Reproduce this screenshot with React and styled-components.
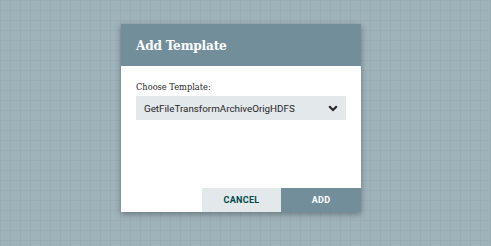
import React from "react";
import styled, { createGlobalStyle } from "styled-components";

const Global = createGlobalStyle`
  html, body { margin: 0; padding: 0; }
  body { font-family: Roboto, "Liberation Sans", sans-serif; }
  #root { width: 491px; height: 246px; }
`;

const Canvas = styled.div`
  position: relative;
  width: 491px;
  height: 246px;
  overflow: hidden;
  background-color: #9fb3bb;
  background-image:
    linear-gradient(to right, #99adb5 1px, transparent 1px),
    linear-gradient(to bottom, #99adb5 1px, transparent 1px);
  background-size: 10px 10px;
  background-position: 0 0;
`;

const Dialog = styled.div`
  position: absolute;
  left: 121px;
  top: 24px;
  width: 240px;
  height: 188px;
  background: #ffffff;
  box-shadow: 0 2px 6px rgba(0, 0, 0, 0.35);
  display: flex;
  flex-direction: column;
`;

const Header = styled.div`
  height: 42px;
  background: #728e9b;
  display: flex;
  align-items: center;
  padding: 0 15px;
  box-sizing: border-box;
`;

const Title = styled.h2`
  margin: 0;
  font-family: "DejaVu Serif Condensed", "Liberation Serif", serif;
  font-weight: bold;
  font-size: 13.5px;
  color: #ffffff;
  letter-spacing: -0.2px;
`;

const Body = styled.div`
  flex: 1;
  padding: 14px 15px 0 15px;
  display: flex;
  flex-direction: column;
`;

const Label = styled.div`
  font-family: "DejaVu Serif Condensed", "Liberation Serif", serif;
  font-size: 9.2px;
  color: #262626;
  line-height: 14px;
  margin-bottom: 2px;
`;

const Select = styled.div`
  width: 210px;
  height: 24px;
  background: #e3e8eb;
  display: flex;
  align-items: center;
  justify-content: space-between;
  padding: 0 8px 0 8px;
  box-sizing: border-box;
  font-family: Roboto, "Liberation Sans", sans-serif;
  font-size: 9.8px;
  color: #262626;
`;

const Footer = styled.div`
  display: flex;
  justify-content: flex-end;
  height: 24px;
`;

const Button = styled.button`
  width: ${(p) => p.$w}px;
  height: 24px;
  border: none;
  margin: 0;
  padding: 0;
  font-family: Roboto, "Liberation Sans", sans-serif;
  font-weight: bold;
  font-size: 9px;
  letter-spacing: 0.3px;
  background: ${(p) => (p.$primary ? "#728e9b" : "#e3e8eb")};
  color: ${(p) => (p.$primary ? "#ffffff" : "#004849")};
`;

export default function App() {
  return (
    <>
      <Global />
      <Canvas>
        <Dialog>
          <Header>
            <Title>Add Template</Title>
          </Header>
          <Body>
            <Label>Choose Template:</Label>
            <Select>
              <span>GetFileTransformArchiveOrigHDFS</span>
              <svg width="10" height="7" viewBox="0 0 10 7">
                <polyline points="1.2,1.3 5,5 8.8,1.3" fill="none" stroke="#262626" strokeWidth="2.2" />
              </svg>
            </Select>
          </Body>
          <Footer>
            <Button $w={79}>CANCEL</Button>
            <Button $w={80} $primary>ADD</Button>
          </Footer>
        </Dialog>
      </Canvas>
    </>
  );
}
